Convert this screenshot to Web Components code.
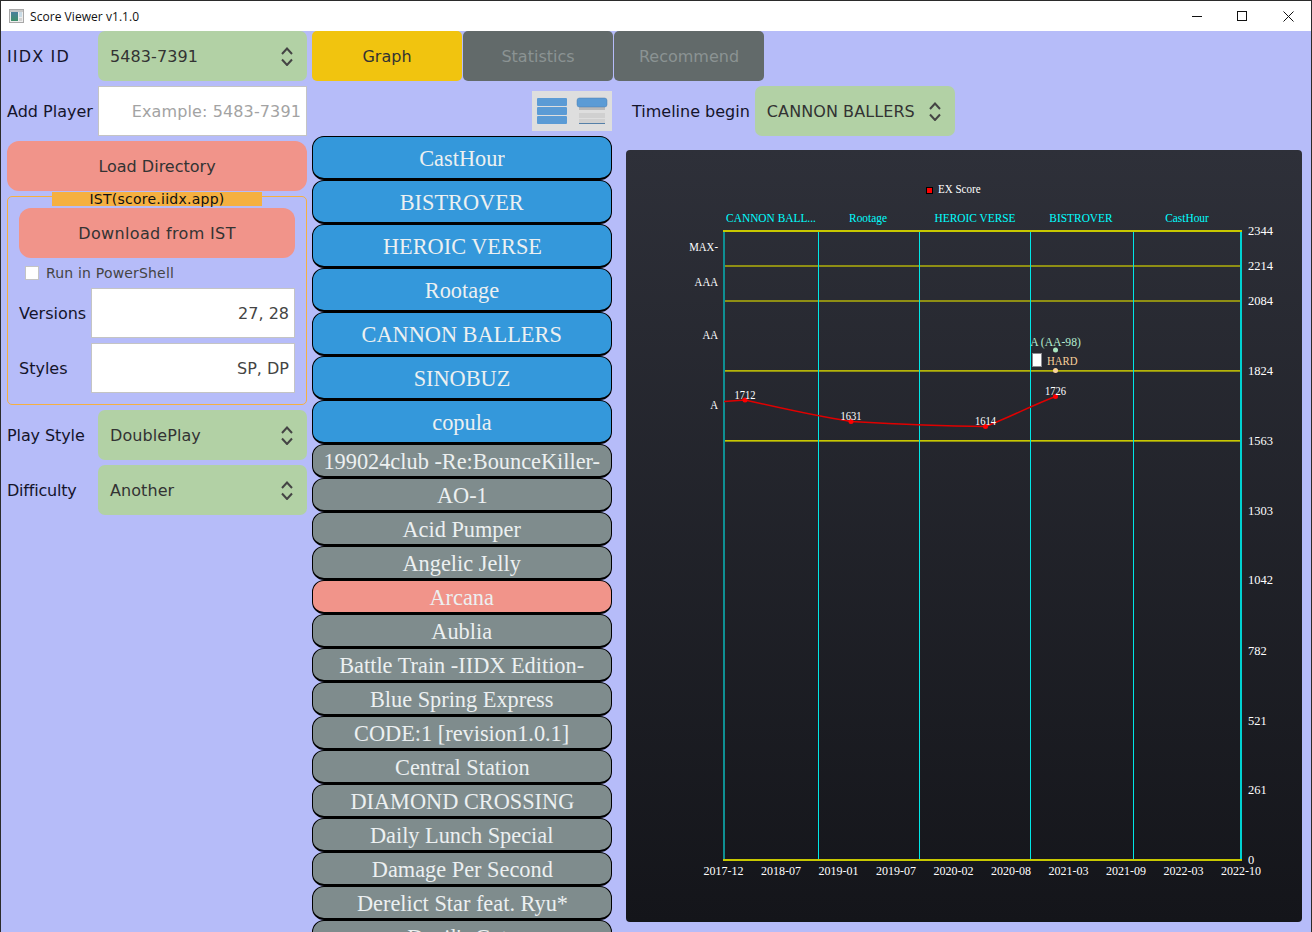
<!DOCTYPE html>
<html>
<head>
<meta charset="utf-8">
<title>Score Viewer</title>
<style>
html, body { margin: 0; height: 100%; overflow: hidden; }
body { font-family: "DejaVu Sans", sans-serif; }
</style>
</head>
<body>
<score-app></score-app>
<script>
const UI_FONT = '"DejaVu Sans", "Liberation Sans", sans-serif';

class ScoreTitlebar extends HTMLElement {
    constructor() {
        super();
        this.attachShadow({ mode: "open" });
        this.shadowRoot.innerHTML = `
        <style>
            :host { display: flex; align-items: center; height: 30px; background: #fff; color: #111;
                font: 12px "Open Sans", "Noto Sans", sans-serif; flex: none; }
            .icon { margin-left: 8px; margin-right: 6px; display: block; }
            .title { flex: 1; letter-spacing: .05px; }
            .ctl { width: 45px; height: 30px; display: flex; align-items: center; justify-content: center; }
            .ctl svg { display: block; }
            .max { margin-right: 1px; }
        </style>
        <svg class="icon" width="15" height="14" viewBox="0 0 15 14">
            <defs><linearGradient id="ig" x1="0" y1="0" x2="0" y2="1"><stop offset="0" stop-color="#4a7f9c"/><stop offset="1" stop-color="#3f8f6a"/></linearGradient></defs>
            <rect x="0.5" y="0.5" width="14" height="13" fill="#eeeeee" stroke="#a8a8a8"/>
            <rect x="1" y="1" width="13" height="2" fill="#c8c8c8"/>
            <rect x="2" y="3" width="7" height="9" fill="url(#ig)"/>
            <rect x="10" y="3" width="3" height="5" fill="#c9dbe6"/>
            <rect x="10" y="9" width="3" height="3" fill="#d4d4d4"/>
        </svg>
        <span class="title"><slot></slot></span>
        <span class="ctl"><svg width="11" height="11" viewBox="0 0 11 11"><path d="M0 5.5H10" stroke="#111" fill="none"/></svg></span>
        <span class="ctl max"><svg width="11" height="11" viewBox="0 0 11 11"><rect x="0.5" y="0.5" width="9" height="9" stroke="#111" fill="none"/></svg></span>
        <span class="ctl"><svg width="11" height="11" viewBox="0 0 11 11"><path d="M0.5 0.5L10.5 10.5M10.5 0.5L0.5 10.5" stroke="#111" fill="none"/></svg></span>
        `;
    }
}
customElements.define("score-titlebar", ScoreTitlebar);

class ScoreCombo extends HTMLElement {
    constructor() {
        super();
        this.attachShadow({ mode: "open" });
        this.shadowRoot.innerHTML = `
        <style>
            :host { display: flex; align-items: center; justify-content: space-between; height: 50px;
                box-sizing: border-box; padding: 0 14px 0 12px; background: #b2d1a5; border-radius: 7px;
                color: #333; font: 16px ${UI_FONT}; }
            span { letter-spacing: .08px; }
            svg { display: block; }
        </style>
        <span><slot></slot></span>
        <svg width="12" height="19" viewBox="0 0 12 19">
            <path d="M1 7L6 1.5L11 7M1 12.5L6 18L11 12.5" fill="none" stroke="#444" stroke-width="2"/>
        </svg>
        `;
    }
}
customElements.define("score-combo", ScoreCombo);

class ScoreField extends HTMLElement {
    constructor() {
        super();
        this.attachShadow({ mode: "open" });
        this.shadowRoot.innerHTML = `
        <style>
            :host { display: flex; align-items: center; justify-content: flex-end; height: 50px;
                box-sizing: border-box; padding: 0 5px; background: #fff; border: 1px solid #c4c4c4;
                color: #444; font: 16px ${UI_FONT}; white-space: nowrap; }
            :host([placeholder]) { color: #a3a3a3; letter-spacing: .12px; }
        </style>
        <slot></slot>
        `;
    }
}
customElements.define("score-field", ScoreField);

class ScoreRow extends HTMLElement {
    static get observedAttributes() {
        return ["label", "spacing"];
    }
    constructor() {
        super();
        this.attachShadow({ mode: "open" });
        this.shadowRoot.innerHTML = `
        <style>
            :host { display: flex; align-items: center; height: 50px; color: #14142b; font: 16px ${UI_FONT}; }
            .label { flex: none; width: var(--label-width, 91px); white-space: nowrap; }
            .body { flex: 1; min-width: 0; }
        </style>
        <span class="label"></span>
        <div class="body"><slot></slot></div>
        `;
    }
    attributeChangedCallback(attr, oldVal, newVal) {
        const label = this.shadowRoot.querySelector(".label");
        if (attr === "label") {
            label.textContent = newVal;
        }
        if (attr === "spacing") {
            label.style.letterSpacing = newVal;
        }
    }
}
customElements.define("score-row", ScoreRow);

class ScoreButton extends HTMLElement {
    constructor() {
        super();
        this.attachShadow({ mode: "open" });
        this.shadowRoot.innerHTML = `
        <style>
            :host { display: flex; align-items: center; justify-content: center; height: 50px;
                background: #f1948a; border-radius: 12px; color: #333; font: 16px ${UI_FONT}; }
        </style>
        <slot></slot>
        `;
    }
}
customElements.define("score-button", ScoreButton);

class ScoreGroup extends HTMLElement {
    static get observedAttributes() {
        return ["title"];
    }
    constructor() {
        super();
        this.attachShadow({ mode: "open" });
        this.shadowRoot.innerHTML = `
        <style>
            :host { display: block; position: relative; box-sizing: border-box; border: 1px solid #f5b041;
                border-radius: 5px; padding: 11px 11px 11px; }
            .title { position: absolute; left: 44px; top: -5px; width: 210px; height: 14px; background: #f5b041;
                color: #111; font: 14px/14px ${UI_FONT}; letter-spacing: .25px; text-align: center; white-space: nowrap; }
        </style>
        <div class="title"></div>
        <slot></slot>
        `;
    }
    attributeChangedCallback(attr, oldVal, newVal) {
        this.shadowRoot.querySelector(".title").textContent = newVal;
    }
}
customElements.define("score-group", ScoreGroup);

class ScoreCheck extends HTMLElement {
    constructor() {
        super();
        this.attachShadow({ mode: "open" });
        this.shadowRoot.innerHTML = `
        <style>
            :host { display: flex; align-items: center; height: 30px; padding-left: 6px; color: #444;
                font: 14px ${UI_FONT}; letter-spacing: .18px; }
            .box { width: 12px; height: 12px; background: #fff; border: 1px solid #c4c4c4; margin-right: 7px; }
        </style>
        <span class="box"></span>
        <slot></slot>
        `;
    }
}
customElements.define("score-check", ScoreCheck);

class ScoreTab extends HTMLElement {
    constructor() {
        super();
        this.attachShadow({ mode: "open" });
        this.shadowRoot.innerHTML = `
        <style>
            :host { display: flex; align-items: center; justify-content: center; width: 150px; height: 50px;
                background: #626a6a; border-radius: 5px; color: #8b9393; font: 16px ${UI_FONT}; }
            :host([active]) { background: #f1c40f; color: #333; }
        </style>
        <slot></slot>
        `;
    }
}
customElements.define("score-tab", ScoreTab);

class ViewToggle extends HTMLElement {
    constructor() {
        super();
        this.attachShadow({ mode: "open" });
        this.shadowRoot.innerHTML = `
        <style>
            :host { display: block; width: 80px; height: 40px; background: #dedede; }
            svg { display: block; }
        </style>
        <svg width="80" height="40" viewBox="0 0 80 40">
            <g fill="#5b9bd5">
                <rect x="5" y="7" width="30" height="8" rx="1"/>
                <rect x="5" y="16" width="30" height="8" rx="1"/>
                <rect x="5" y="25" width="30" height="8" rx="1"/>
            </g>
            <rect x="47" y="14" width="26" height="5" fill="#b9b9b9"/>
            <rect x="45" y="7" width="30" height="9" rx="2.5" fill="#5b9bd5" stroke="#4f7fae" stroke-width="0.5"/>
            <rect x="47" y="22" width="26" height="5" fill="#d0d0d0"/>
            <rect x="47" y="28" width="26" height="4" fill="#d0d0d0"/>
            <rect x="47" y="32" width="26" height="1" fill="#5580a8"/>
        </svg>
        `;
    }
}
customElements.define("view-toggle", ViewToggle);

class SongButton extends HTMLElement {
    constructor() {
        super();
        this.attachShadow({ mode: "open" });
        this.shadowRoot.innerHTML = `
        <style>
            :host { display: flex; align-items: center; justify-content: center; flex: none; height: 34px;
                box-sizing: border-box; background: #7f8c8d; border: 2px solid #000; border-radius: 12px;
                border-width: 1px 1px 2px 1px; color: #ecf0f1; font: 24px "Liberation Serif", serif; white-space: nowrap; }
            :host([version]) { height: 44px; background: #3498db; }
            :host([selected]) { background: #f1948a; }
            /* the reference's serif is narrower than Liberation Serif */
            span { display: inline-block; transform: scaleX(.93); padding-top: 2px; }
        </style>
        <span><slot></slot></span>
        `;
    }
}
customElements.define("song-button", SongButton);

class ScoreChart extends HTMLElement {
    constructor() {
        super();
        this.attachShadow({ mode: "open" });
        this.shadowRoot.appendChild(this.getTemplate().content.cloneNode(true));
    }
    // x, y are page coordinates, sx squeezes the glyphs horizontally
    label(x, y, str, sx = 1, anchor = "start", extra = "") {
        return `<text transform="translate(${x} ${y}) scale(${sx} 1)" text-anchor="${anchor}" ${extra}>${str}</text>`;
    }
    getTemplate() {
        const left = 724, right = 1241, top = 231, bottom = 860;
        const vLines = [818, 919, 1030, 1133];
        const hLines = [266, 301, 371, 441];
        const vers = [["CANNON BALL...", 771], ["Rootage", 868], ["HEROIC VERSE", 975], ["BISTROVER", 1081], ["CastHour", 1187]];
        const grades = [["MAX-", 247], ["AAA", 282], ["AA", 335], ["A", 405]];
        const scores = [["2344", 231], ["2214", 266], ["2084", 301], ["1824", 371], ["1563", 441], ["1303", 511],
            ["1042", 580], ["782", 651], ["521", 721], ["261", 790], ["0", 860]];
        const dates = ["2017-12", "2018-07", "2019-01", "2019-07", "2020-02", "2020-08", "2021-03", "2021-09", "2022-03", "2022-10"];
        const points = [[745, 400, "1712"], [851, 421.5, "1631"], [985.5, 426.5, "1614"], [1055.5, 396.5, "1726"]];

        const template = document.createElement("template");
        template.innerHTML = `
        <style>
            :host { display: block; width: 676px; height: 772px; border-radius: 4px;
                background: linear-gradient(#2e3039, #14151a); }
            svg { display: block; }
            text { font-family: "Liberation Serif", serif; font-size: 12px; fill: #fff; dominant-baseline: central; }
            .cyan { fill: #00ffff; }
        </style>
        <svg width="676" height="772" viewBox="626 150 676 772">
            ${hLines.map(y => `<rect x="${left}" y="${y - 1}" width="${right - left}" height="2" fill="#8f8f14"/>`).join("")}
            <rect x="${left}" y="370" width="${right - left}" height="1" fill="#b4b408"/>
            <rect x="${left}" y="440" width="${right - left}" height="1" fill="#c8c800"/>
            ${vLines.map(x => `<rect x="${x}" y="${top}" width="1" height="${bottom - top}" fill="#00e6e6"/>`).join("")}
            <rect x="${left - 1}" y="${top}" width="2" height="${bottom - top}" fill="#0f8f92"/>
            <rect x="${right - 1}" y="${top}" width="2" height="${bottom - top}" fill="#00d2d2"/>
            <rect x="${left - 1}" y="${top - 1}" width="${right - left + 2}" height="2" fill="#c8c800"/>
            <rect x="${left - 1}" y="${bottom - 1}" width="${right - left + 2}" height="2" fill="#c8c800"/>

            <rect x="926.5" y="187.5" width="6" height="6" fill="#ff0000" stroke="#000"/>
            ${this.label(938, 189, "EX Score", .92)}

            ${vers.map(v => this.label(v[1], 218, v[0], .95, "middle", 'class="cyan"')).join("")}
            ${grades.map(g => this.label(718, g[1], g[0], .9, "end")).join("")}
            ${scores.map(s => this.label(1248, s[1], s[0], 1.04)).join("")}
            ${dates.map((d, i) => this.label(723.5 + i * 57.5, 871, d, 1, "middle")).join("")}

            <path d="M724 401.5 L745 400 C 780 408 815 416 851 421.5 C 895 424 940 426 985.5 426.5 C 1010 417 1033 405 1055.5 396.5"
                fill="none" stroke="#e00000" stroke-width="1.5"/>
            ${points.map(p => `<circle cx="${p[0]}" cy="${p[1]}" r="2.5" fill="#ff0000"/>` + this.label(p[0], p[1] - 5.5, p[2], .88, "middle")).join("")}

            <circle cx="1055.5" cy="350" r="2.5" fill="#a8e6c0"/>
            ${this.label(1055.5, 342, "A (AA-98)", .97, "middle", 'style="fill:#b4ecd0"')}
            <rect x="1032.5" y="353.5" width="9" height="13" fill="#fff" stroke="#8a8a90"/>
            <circle cx="1055.5" cy="370.5" r="2.5" fill="#fbd29c"/>
            ${this.label(1047, 361, "HARD", .9, "start", 'style="fill:#fbd29c"')}
        </svg>
        `;
        return template;
    }
}
customElements.define("score-chart", ScoreChart);

class ScoreApp extends HTMLElement {
    constructor() {
        super();
        this.attachShadow({ mode: "open" });
        const songs = ["199024club -Re:BounceKiller-", "AO-1", "Acid Pumper", "Angelic Jelly", "Arcana", "Aublia",
            "Battle Train -IIDX Edition-", "Blue Spring Express", "CODE:1 [revision1.0.1]", "Central Station",
            "DIAMOND CROSSING", "Daily Lunch Special", "Damage Per Second", "Derelict Star feat. Ryu*", "Devil's Gate"];
        const versions = ["CastHour", "BISTROVER", "HEROIC VERSE", "Rootage", "CANNON BALLERS", "SINOBUZ", "copula"];
        this.shadowRoot.innerHTML = `
        <style>
            :host { display: flex; flex-direction: column; box-sizing: border-box; width: 1312px; height: 932px;
                overflow: hidden; border: 1px solid #2b2b2b; border-bottom: 0; background: #b6bcf9; }
            .main { display: flex; flex: 1; min-height: 0; padding-left: 6px; gap: 5px; }
            .left { display: flex; flex-direction: column; gap: 5px; flex: none; width: 300px; }
            .group-rows { display: flex; flex-direction: column; --label-width: 72px; }
            .group-rows score-row + score-row { margin-top: 5px; }
            .ist { letter-spacing: .35px; }
            .right { display: flex; flex-direction: column; gap: 5px; flex: 1; min-width: 0; }
            .tabs { display: flex; gap: 1px; flex: none; }
            .lower { display: flex; flex: 1; min-height: 0; gap: 14px; }
            .list { display: flex; flex-direction: column; flex: none; width: 300px; overflow: hidden; }
            .tools { display: flex; align-items: center; justify-content: flex-end; flex: none; height: 50px; }
            .chart-col { display: flex; flex-direction: column; flex: none; width: 676px; gap: 14px; }
            .timeline { display: flex; align-items: center; flex: none; height: 50px; padding-left: 6px;
                color: #14142b; font: 16px ${UI_FONT}; }
            .timeline span { margin-right: 5px; white-space: nowrap; }
            .timeline score-combo { width: 200px; }
        </style>
        <score-titlebar>Score Viewer v1.1.0</score-titlebar>
        <div class="main">
            <div class="left">
                <score-row label="IIDX ID" spacing="1.15px"><score-combo>5483-7391</score-combo></score-row>
                <score-row label="Add Player"><score-field placeholder>Example: 5483-7391</score-field></score-row>
                <score-button>Load Directory</score-button>
                <score-group title="IST(score.iidx.app)">
                    <div class="group-rows">
                        <score-button class="ist">Download from IST</score-button>
                        <score-check>Run in PowerShell</score-check>
                        <score-row label="Versions"><score-field>27, 28</score-field></score-row>
                        <score-row label="Styles"><score-field>SP, DP</score-field></score-row>
                    </div>
                </score-group>
                <score-row label="Play Style" spacing="-.1px"><score-combo>DoublePlay</score-combo></score-row>
                <score-row label="Difficulty" spacing="-.2px"><score-combo>Another</score-combo></score-row>
            </div>
            <div class="right">
                <div class="tabs">
                    <score-tab active>Graph</score-tab>
                    <score-tab>Statistics</score-tab>
                    <score-tab>Recommend</score-tab>
                </div>
                <div class="lower">
                    <div class="list">
                        <div class="tools"><view-toggle></view-toggle></div>
                        ${versions.map(v => `<song-button version>${v}</song-button>`).join("")}
                        ${songs.map(s => `<song-button${s === "Arcana" ? " selected" : ""}>${s}</song-button>`).join("")}
                    </div>
                    <div class="chart-col">
                        <div class="timeline"><span>Timeline begin</span><score-combo>CANNON BALLERS</score-combo></div>
                        <score-chart></score-chart>
                    </div>
                </div>
            </div>
        </div>
        `;
    }
}
customElements.define("score-app", ScoreApp);
</script>
</body>
</html>
